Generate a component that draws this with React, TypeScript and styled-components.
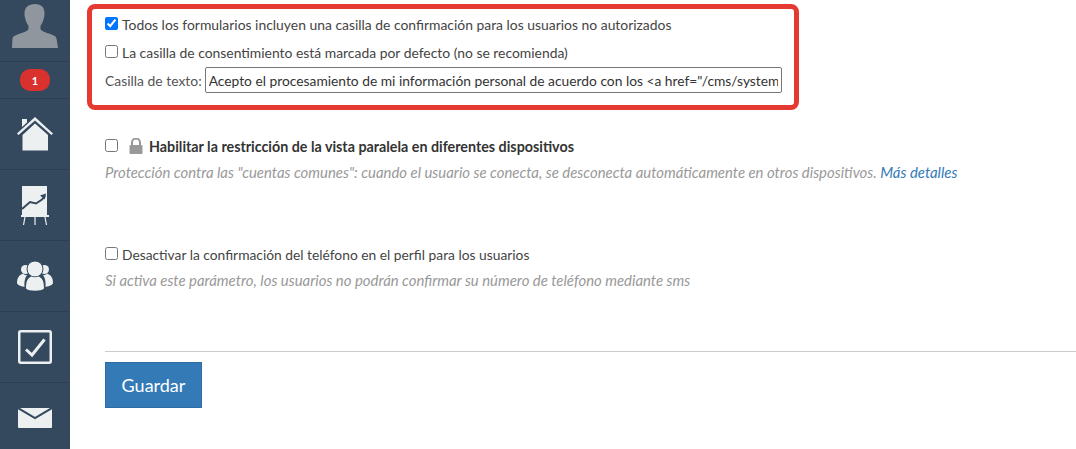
import React from 'react';
import styled, { createGlobalStyle } from 'styled-components';

const GlobalStyle = createGlobalStyle`
  html, body {
    margin: 0;
    padding: 0;
    height: 100%;
    background: #fff;
    overflow: hidden;
  }
  body {
    font-family: Lato, "Liberation Sans", sans-serif;
    font-size: 14px;
    color: #333;
  }
`;

const Page = styled.div`
  display: flex;
  width: 1076px;
  height: 449px;
  overflow: hidden;
`;

const Sidebar = styled.nav`
  flex: 0 0 70px;
  display: flex;
  flex-direction: column;
  background: #34495e;
`;

const NavItem = styled.div<{ $height: number }>`
  flex: 0 0 ${(p) => p.$height}px;
  height: ${(p) => p.$height}px;
  box-sizing: border-box;
  display: flex;
  align-items: center;
  justify-content: center;
  border-bottom: 1px solid #2c3e50;
`;

const ProfileItem = styled(NavItem)`
  align-items: flex-start;
  padding-top: 4px;
`;

const Badge = styled.span`
  width: 30px;
  height: 22px;
  border-radius: 10px;
  background: #d9312d;
  color: #fff;
  font-size: 11px;
  font-weight: 700;
  display: flex;
  align-items: center;
  justify-content: center;
`;

const Content = styled.main`
  flex: 1;
  min-width: 0;
  padding: 4px 0 0 17px;
`;

const Highlight = styled.section`
  box-sizing: border-box;
  width: 712px;
  height: 106px;
  border: 5px solid #e53a31;
  border-radius: 8px;
  padding: 1px 12px 0 13px;
  display: flex;
  flex-direction: column;
`;

const CheckRow = styled.label`
  display: flex;
  align-items: center;
  height: 28px;
  color: #444;
  font-size: 13.9px;
`;

const Check = styled.input.attrs({ type: 'checkbox' })`
  width: 13px;
  height: 13px;
  margin: -1px 4px 0 0;
  flex: none;
`;

const TextRow = styled.div`
  display: flex;
  align-items: center;
  height: 28px;
  color: #555;
  gap: 3px;
  font-size: 13.9px;
`;

const TextField = styled.input`
  flex: 1;
  min-width: 0;
  box-sizing: border-box;
  height: 26px;
  padding: 0 3px;
  border: 1px solid #767676;
  border-radius: 2px;
  font-family: inherit;
  font-size: 13.8px;
  color: #333;
  background: #fff;
`;

const Options = styled.div`
  padding-left: 18px;
`;

const Option = styled.div<{ $top: number; $height: number }>`
  margin-top: ${(p) => p.$top}px;
  height: ${(p) => p.$height}px;
`;

const BoldRow = styled(CheckRow)`
  height: 20px;
  font-size: 14.3px;
  font-weight: 700;
  color: #333;
`;

const PlainRow = styled(CheckRow)`
  height: 20px;
  font-size: 13.8px;
`;

const LockIcon = styled.svg`
  margin: 0 6px 0 7px;
  flex: none;
`;

const Hint = styled.p`
  margin: 6px 0 0;
  font-size: 14.9px;
  font-style: italic;
  color: #999;
  line-height: 20px;
`;

const HintLink = styled.a`
  color: #337ab7;
  text-decoration: none;
`;

const Footer = styled.div`
  border-top: 1px solid #ccc;
  padding-top: 10px;
`;

const SaveButton = styled.button`
  box-sizing: border-box;
  width: 97px;
  height: 46px;
  background: #337ab7;
  border: 1px solid #2e6da4;
  color: #fff;
  font-family: inherit;
  font-size: 18px;
  padding: 0;
`;

const Avatar = () => (
  <svg width="46" height="44" viewBox="0 0 46 44">
    <path
      d="M23 0c6.500 0 9.500 3.500 9.500 9.500 0 2.800-.5 4.300-1 6-.8 2.800-1.700 4.700-3 6.300v3.500c1.500 2.200 6 3.500 11 5.200 3.400 1.200 4.700 2.300 5.100 4.500L46 44H0l.4-9c.4-2.200 1.700-3.300 5.100-4.500 5-1.700 9.500-3 11-5.200v-3.500c-1.300-1.600-2.200-3.500-3-6.300-.5-1.700-1-3.200-1-6C12.500 3.500 16.500 0 23 0z"
      fill="#8f969e"
    />
  </svg>
);

const HomeIcon = () => (
  <svg width="36" height="34" viewBox="0 0 36 34">
    <path d="M5 2h5v3.500L5 10z" fill="#ecf0f1" />
    <path d="M18 0 36 16.500 34.500 18 18 3.500 1.500 18 0 16.500z" fill="#ecf0f1" />
    <path d="M18 6.500 31 18v15.500H5.500V18z" fill="#ecf0f1" />
  </svg>
);

const ChartIcon = () => (
  <svg width="28" height="39" viewBox="0 0 28 39">
    <rect x="1" y="0" width="25" height="30" fill="#ecf0f1" />
    <path d="M1 23l8-7 6 1.500 6-4 3-4" fill="none" stroke="#34495e" strokeWidth="2" />
    <path d="M19 9.500 25 7.500 23.800 13.500z" fill="#34495e" />
    <rect x="0" y="29" width="28" height="2" fill="#ecf0f1" />
    <path d="M4 31 2.500 39M14 31v8M24 31l1.500 8" stroke="#ecf0f1" strokeWidth="1.200" fill="none" />
  </svg>
);

const UsersIcon = () => (
  <svg width="36" height="30" viewBox="0 0 36 30">
    <circle cx="8.500" cy="8.500" r="4.500" fill="#ecf0f1" />
    <circle cx="27.500" cy="8.500" r="4.500" fill="#ecf0f1" />
    <path d="M0 22c0-5 2-8 6-9.500 1 1 2 1.500 4 1.500-2 2.500-3 6.500-2.500 12C3 25 0 23.500 0 22z" fill="#ecf0f1" />
    <path d="M36 22c0-5-2-8-6-9.500-1 1-2 1.500-4 1.500 2 2.500 3 6.500 2.500 12C33 25 36 23.500 36 22z" fill="#ecf0f1" />
    <circle cx="18" cy="8" r="8" fill="#ecf0f1" stroke="#34495e" strokeWidth="1" />
    <path d="M9 27.500c0-8 2-10.500 5.500-12 2.200 1 4.800 1 7 0 3.500 1.500 5.500 4 5.500 12-2.500 3-15.500 3-18 0z" fill="#ecf0f1" />
  </svg>
);

const TaskIcon = () => (
  <svg width="34" height="34" viewBox="0 0 34 34">
    <rect x="1.250" y="1.250" width="31.500" height="31.500" rx="1.500" fill="none" stroke="#ecf0f1" strokeWidth="2.500" />
    <path d="M8 19.500 14 25 26.500 9.500" fill="none" stroke="#ecf0f1" strokeWidth="3" />
  </svg>
);

const MailIcon = () => (
  <svg width="34" height="20" viewBox="0 0 34 20">
    <rect width="34" height="20" rx="1" fill="#ecf0f1" />
    <path d="M0 0 17 10 34 0" fill="none" stroke="#34495e" strokeWidth="2" />
  </svg>
);

const App: React.FC = () => {
  return (
    <Page>
      <GlobalStyle />
      <Sidebar>
        <ProfileItem $height={62}><Avatar /></ProfileItem>
        <NavItem $height={37}><Badge>1</Badge></NavItem>
        <NavItem $height={71}><HomeIcon /></NavItem>
        <NavItem $height={71}><ChartIcon /></NavItem>
        <NavItem $height={71}><UsersIcon /></NavItem>
        <NavItem $height={71}><TaskIcon /></NavItem>
        <NavItem $height={71}><MailIcon /></NavItem>
      </Sidebar>
      <Content>
        <Highlight>
          <CheckRow>
            <Check defaultChecked />
            Todos los formularios incluyen una casilla de confirmación para los usuarios no autorizados
          </CheckRow>
          <CheckRow>
            <Check />
            La casilla de consentimiento está marcada por defecto (no se recomienda)
          </CheckRow>
          <TextRow>
            Casilla de texto:
            <TextField
              readOnly
              value={'Acepto el procesamiento de mi información personal de acuerdo con los <a href="/cms/system/privacy">'}
            />
          </TextRow>
        </Highlight>
        <Options>
          <Option $top={26} $height={108}>
            <BoldRow>
              <Check />
              <LockIcon width="14" height="16" viewBox="0 0 14 16">
                <path d="M3 7V4.500a4 4 0 0 1 8 0V7" fill="none" stroke="#999" strokeWidth="2" />
                <rect x="0.500" y="7" width="13" height="9" rx="1" fill="#999" />
              </LockIcon>
              Habilitar la restricción de la vista paralela en diferentes dispositivos
            </BoldRow>
            <Hint>
              Protección contra las "cuentas comunes": cuando el usuario se conecta, se desconecta automáticamente en otros dispositivos.{' '}
              <HintLink href="#">Más detalles</HintLink>
            </Hint>
          </Option>
          <Option $top={0} $height={107}>
            <PlainRow>
              <Check />
              Desactivar la confirmación del teléfono en el perfil para los usuarios
            </PlainRow>
            <Hint>Si activa este parámetro, los usuarios no podrán confirmar su número de teléfono mediante sms</Hint>
          </Option>
          <Footer>
            <SaveButton>Guardar</SaveButton>
          </Footer>
        </Options>
      </Content>
    </Page>
  );
};

export default App;
